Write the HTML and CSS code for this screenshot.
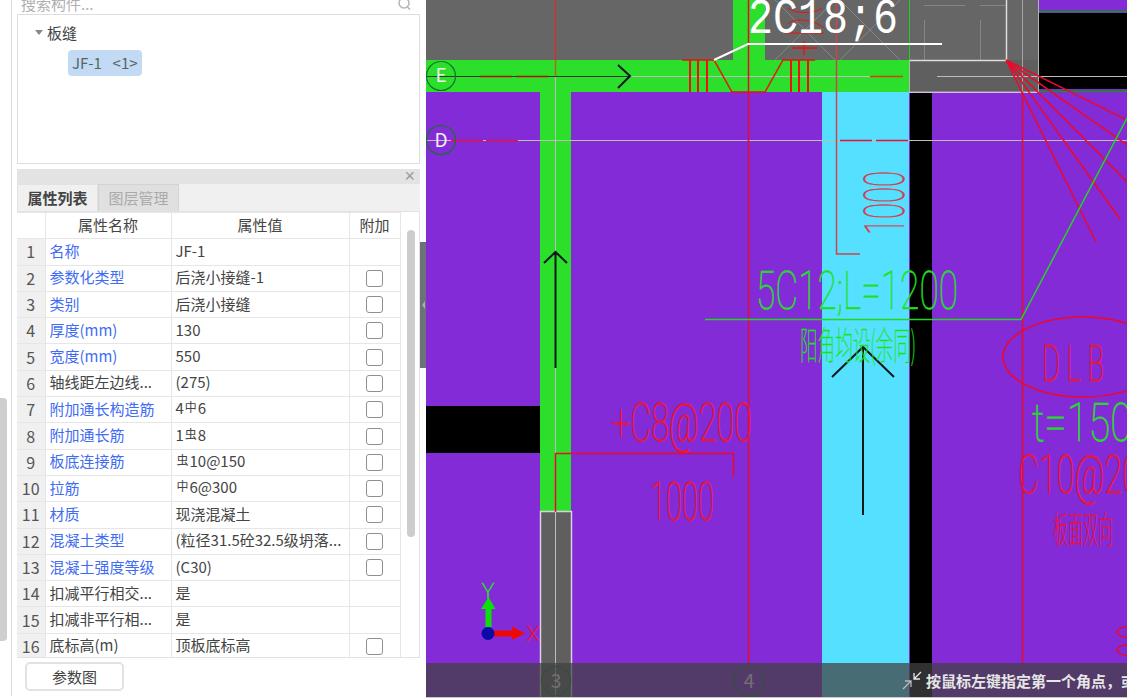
FILE: index.html
```html
<!DOCTYPE html>
<html lang="en">
<head>
    <meta charset="UTF-8">
    <meta name="viewport" content="width=device-width, initial-scale=1.0">
    <title>板缝属性</title>
    <link rel="stylesheet" href="styles.css">
</head>
<body>
<div class="app">
    <!-- Left side: component tree and properties -->
    <div class="sidebar">
        <div class="outer-scroll"><div class="outer-thumb"></div></div>

        <div class="panel">
            <div class="search">
                <span class="search-text">搜索构件...</span>
                <svg class="search-icon" width="16" height="16" viewBox="0 0 16 16">
                    <circle cx="7" cy="3" r="5" fill="none" stroke="#b5b5b5" stroke-width="1.5"/>
                    <line x1="10.5" y1="7" x2="13" y2="9.5" stroke="#b5b5b5" stroke-width="1.5"/>
                </svg>
            </div>

            <div class="tree">
                <div class="tree-group"><span class="tree-arrow"></span>板缝</div>
                <div class="tree-item">JF-1 &nbsp;&lt;1&gt;</div>
            </div>

            <div class="prop-head"><span class="prop-close">×</span></div>
            <div class="tabs">
                <div class="tab active">属性列表</div>
                <div class="tab">图层管理</div>
            </div>

            <div class="prop-body">
                <table class="props">
                    <colgroup>
                        <col class="col-num"><col class="col-name"><col class="col-val"><col class="col-add">
                    </colgroup>
                    <tr class="head"><th></th><th>属性名称</th><th>属性值</th><th>附加</th></tr>
                    <tr><td class="num">1</td><td class="link">名称</td><td>JF-1</td><td></td></tr>
                    <tr><td class="num">2</td><td class="link">参数化类型</td><td>后浇小接缝-1</td><td><span class="check"></span></td></tr>
                    <tr><td class="num">3</td><td class="link">类别</td><td>后浇小接缝</td><td><span class="check"></span></td></tr>
                    <tr><td class="num">4</td><td class="link">厚度(mm)</td><td>130</td><td><span class="check"></span></td></tr>
                    <tr><td class="num">5</td><td class="link">宽度(mm)</td><td>550</td><td><span class="check"></span></td></tr>
                    <tr><td class="num">6</td><td>轴线距左边线...</td><td>(275)</td><td><span class="check"></span></td></tr>
                    <tr><td class="num">7</td><td class="link">附加通长构造筋</td><td>4<span class="bar">中</span>6</td><td><span class="check"></span></td></tr>
                    <tr><td class="num">8</td><td class="link">附加通长筋</td><td>1<span class="bar">虫</span>8</td><td><span class="check"></span></td></tr>
                    <tr><td class="num">9</td><td class="link">板底连接筋</td><td><span class="bar">虫</span>10@150</td><td><span class="check"></span></td></tr>
                    <tr><td class="num">10</td><td class="link">拉筋</td><td><span class="bar">中</span>6@300</td><td><span class="check"></span></td></tr>
                    <tr><td class="num">11</td><td class="link">材质</td><td>现浇混凝土</td><td><span class="check"></span></td></tr>
                    <tr><td class="num">12</td><td class="link">混凝土类型</td><td>(粒径31.5砼32.5级坍落...</td><td><span class="check"></span></td></tr>
                    <tr><td class="num">13</td><td class="link">混凝土强度等级</td><td>(C30)</td><td><span class="check"></span></td></tr>
                    <tr><td class="num">14</td><td>扣减平行相交...</td><td>是</td><td></td></tr>
                    <tr><td class="num">15</td><td>扣减非平行相...</td><td>是</td><td></td></tr>
                    <tr><td class="num">16</td><td>底标高(m)</td><td>顶板底标高</td><td><span class="check"></span></td></tr>
                </table>
                <div class="prop-scroll"><div class="prop-thumb"></div></div>
            </div>

            <div class="prop-foot"><button class="btn">参数图</button></div>
        </div>

        <div class="handle"><span class="handle-arrow"></span></div>
    </div>

    <!-- Drawing area -->
    <div class="canvas">
        <svg class="drawing" viewBox="426 0 701 697" width="701" height="697">
            <rect x="426" y="0" width="701" height="697" fill="#832bd6"/>

            <!-- concrete and walls -->
            <rect x="426" y="0" width="613" height="60" fill="#666"/>
            <rect x="909" y="60" width="130" height="32" fill="#5f5f5f"/>
            <rect x="1039" y="13" width="88" height="76" fill="#000"/>
            <rect x="426" y="60" width="483" height="32" fill="#2bdf2b"/>
            <rect x="733" y="0" width="32" height="60" fill="#2bdf2b"/>
            <rect x="540" y="92" width="31" height="420" fill="#2bdf2b"/>
            <rect x="540.5" y="511.5" width="31" height="190" fill="#5f5f5f" stroke="#d9d0e4" stroke-width="1.5"/>
            <rect x="822" y="92" width="87" height="605" fill="#56e0ff"/>
            <rect x="910" y="92" width="22" height="605" fill="#000"/>
            <rect x="426" y="406" width="114" height="47" fill="#000"/>

            <!-- grey details in the corner block -->
            <g stroke="#858585" stroke-width="1" fill="none">
                <path d="M775 0L835 60M835 0L775 60M840 0L900 60M900 0L840 60"/>
                <path d="M924.500 20V60M980.500 20V60M924 5.500H965M980 5.500H1006"/>
            </g>
            <g stroke="#dcdcdc" fill="none">
                <path d="M909 60.500H1006.500V0" stroke-width="1.5"/>
                <path d="M909.500 60V92H1038.500V0" stroke="#b5b5b5"/>
                <path d="M1022.500 0V92" stroke="#a5a5a5"/>
            </g>
            <path d="M909.500 0V60" stroke="#1fd01f"/>
            <path d="M1039 11.500H1127M1039 91.500H1127" stroke="#0a9a0a" stroke-width="1.5"/>
            <path d="M909 92.500H1039" stroke="#d9b8f0" stroke-width="1"/>

            <!-- axis lines -->
            <g stroke="#bdbdbd" stroke-width="1">
                <path d="M426 76.500H870M937 76.500H1127M426 140.500H1127M555.500 76V697"/>
            </g>
            <path d="M426 76.500H630" stroke="#333"/>
            <path d="M555.500 0V60" stroke="#c9352c" stroke-width="1.500"/>
            <path d="M555.500 60V76" stroke="#b5651d" stroke-width="1.500"/>
            <path d="M480 76.500H512M516 76.500H548" stroke="#b30f0f" stroke-width="1.500"/>
            <path d="M870 76.500H903" stroke="#d2420f" stroke-width="1.500"/>
            <path d="M451 140.500H483M486 140.500H518M840 140.500H872M876 140.500H908" stroke="#e8103c" stroke-width="1.500"/>

            <!-- red rebar -->
            <g stroke="#ee1111" stroke-width="1.500" fill="none">
                <path d="M682 60H714L732 92H765L783 60H815"/>
                <path d="M690 60V92M698 60V92M707 60V92M791 60V92M799 60V92M808 60V92" stroke-width="2"/>
                <path d="M792 48H817M804 41V55"/>
                <path d="M788 8C795 14 815 14 822 8M788 24C795 17 815 20 824 28M785 33H824" stroke-width="1"/>
            </g>
            <g stroke="#ea0a2c" stroke-width="1.500" fill="none">
                <path d="M748.500 0V663M1022.500 92V663"/>
                <path d="M1006 60L1127 120M1006 60L1127 145M1006 60L1127 182M1006 60L1120 219M1006 60L1096 242"/>
                <path d="M555 453.500H733.500V477M555.500 453V512"/>
                <ellipse cx="1083" cy="357" rx="80" ry="40"/>
                <ellipse cx="1130" cy="632" rx="13" ry="5.500"/>
                <ellipse cx="1130" cy="650" rx="13" ry="5.500"/>
            </g>
            <path d="M836.500 0V254H860" stroke="#c9454f" stroke-width="1.500" fill="none"/>

            <!-- green leader -->
            <path d="M705 319.500H1021L1127 118" stroke="#1fd81f" stroke-width="1.500" fill="none"/>

            <!-- white leader -->
            <path d="M714 60L748 44H942" stroke="#fff" stroke-width="2" fill="none"/>

            <!-- black arrows -->
            <g stroke="#10181c" stroke-width="2" fill="none">
                <path d="M618 65L630 76L618 88"/>
                <path d="M555.500 368V252M544 263L555.500 252L567 263"/>
                <path d="M863 515V347M832 377L863 347L894 377"/>
            </g>

            <!-- drawing text -->
            <text class="cad-white" x="748" y="33" textLength="150" lengthAdjust="spacingAndGlyphs">2C18;6</text>
            <text class="cad cad-green" x="756" y="309" textLength="202" lengthAdjust="spacingAndGlyphs">5C12;L=1200</text>
            <text class="cad-cn cad-cn-green" x="800" y="359" textLength="116" lengthAdjust="spacingAndGlyphs">阳角均设(余同)</text>
            <text class="cad cad-red" x="612" y="441" textLength="140" lengthAdjust="spacingAndGlyphs">+C8@200</text>
            <text class="cad cad-red" x="650" y="520" textLength="64" lengthAdjust="spacingAndGlyphs">1000</text>
            <text class="cad cad-red cad-dlb" transform="translate(1042 381) scale(.55 1)">DLB</text>
            <text class="cad cad-green" x="1032" y="441" textLength="100" lengthAdjust="spacingAndGlyphs">t=150</text>
            <text class="cad cad-red" x="1018" y="493" textLength="122" lengthAdjust="spacingAndGlyphs">C10@20</text>
            <text class="cad-cn cad-cn-red" x="1053" y="543" textLength="60" lengthAdjust="spacingAndGlyphs">板面双向</text>
            <text class="cad cad-dim" transform="translate(904 235) rotate(-90)" textLength="64" lengthAdjust="spacingAndGlyphs">1000</text>

            <!-- axis bubbles -->
            <g fill="none" stroke="#17702f" stroke-width="1.200">
                <circle cx="441" cy="76" r="14.500"/>
                <circle cx="441" cy="140" r="14.500"/>
                <circle cx="556" cy="681" r="14.500"/>
                <circle cx="749" cy="681" r="15"/>
            </g>
            <text class="bubble" x="441" y="82">E</text>
            <text class="bubble" x="441" y="147">D</text>
            <text class="bubble" x="556" y="688">3</text>
            <text class="bubble" x="749" y="688">4</text>

            <!-- xy gizmo -->
            <path d="M485.500 627V609H481L488.500 597L495.500 609H491.500V627Z" fill="#0be00b"/>
            <path d="M494 630.500H512V626.500L525 633.500L512 640V636.500H494Z" fill="#f00808"/>
            <circle cx="488" cy="633.500" r="6.500" fill="#0a0aa8"/>
            <text class="gizmo gizmo-y" x="488" y="598">Y</text>
            <text class="gizmo gizmo-x" x="533" y="641">X</text>
        </svg>

        <!-- status hint over the drawing -->
        <div class="hint">
            <svg class="hint-icon" width="20" height="20" viewBox="0 0 20 20">
                <g stroke="#e8e8e8" stroke-width="1.300" fill="none">
                    <path d="M19 2L12 9M12 3V9H18"/>
                    <path d="M1 19L9 11M3 11H9V17" stroke="#bbb"/>
                </g>
            </svg>
            <span class="hint-text">按鼠标左键指定第一个角点，或</span>
        </div>
    </div>
</div>
</body>
</html>
```

FILE: styles.css
```css
/* Global styling */
* {
    box-sizing: border-box;
}

html, body {
    margin: 0;
    padding: 0;
    height: 100%;
    overflow: hidden;
    background: #fff;
    font-family: "Noto Sans CJK SC", "Liberation Sans", sans-serif;
    font-size: 15px;
    color: #444;
}

.app {
    display: flex;
    width: 1127px;
    height: 698px;
}

/* Sidebar */
.sidebar {
    display: flex;
    width: 426px;
    flex: none;
    background: #fff;
}

.outer-scroll {
    width: 12px;
    height: 696px;
    padding-top: 398px;
    border-right: 1px solid #ddd;
    flex: none;
}

.outer-thumb {
    width: 7px;
    height: 243px;
    background: #cecece;
    border-radius: 0 4px 4px 0;
}

.panel {
    width: 403px;
    margin-left: 5px;
    flex: none;
}

.handle {
    width: 6px;
    height: 126px;
    margin-top: 242px;
    margin-left: 0;
    background: #6b7278;
    display: flex;
    align-items: center;
    justify-content: center;
}

.handle-arrow {
    border-right: 3px solid #a8adb2;
    border-top: 4px solid transparent;
    border-bottom: 4px solid transparent;
}

/* Search */
.search {
    height: 14px;
    overflow: hidden;
    display: flex;
    justify-content: space-between;
    padding: 0 5px 0 4px;
}

.search-text {
    margin-top: -6px;
    line-height: 20px;
    color: #b0b0b0;
}

.search-icon {
    margin-right: 2px;
}

/* Tree */
.tree {
    height: 150px;
    border: 1px solid #dedede;
    padding-top: 7px;
}

.tree-group {
    display: flex;
    align-items: center;
    height: 20px;
    padding-left: 17px;
    color: #444;
}

.tree-arrow {
    width: 0;
    height: 0;
    margin-right: 4px;
    border-top: 5px solid #888;
    border-left: 4px solid transparent;
    border-right: 4px solid transparent;
}

.tree-item {
    width: 74px;
    height: 26px;
    margin: 8px 0 0 50px;
    padding-left: 4px;
    line-height: 25px;
    white-space: nowrap;
    word-spacing: 2px;
    color: #566;
    background: #c2daf4;
    border-radius: 4px;
}

/* Property panel */
.prop-head {
    height: 15px;
    margin-top: 5px;
    background: #e3e3e3;
    text-align: right;
    padding-right: 5px;
}

.prop-close {
    display: block;
    font-family: "Liberation Sans", sans-serif;
    font-size: 18px;
    line-height: 15px;
    color: #999;
}

.tabs {
    display: flex;
    height: 28px;
    background: #f0f0f0;
    border-bottom: 1px solid #e2e2e2;
}

.tab {
    width: 81px;
    text-align: center;
    line-height: 26px;
    color: #aaa;
    background: #e0e0e0;
    border: 1px solid #d0d4d8;
    border-bottom: none;
}

.tab.active {
    font-weight: bold;
    color: #444;
    background: #f0f0f0;
    border-color: #e2e2e2;
}

.prop-body {
    display: flex;
    height: 446px;
    overflow: hidden;
    border-right: 1px solid #e2e2e2;
    border-bottom: 1px solid #e2e2e2;
}

.props {
    width: 383px;
    flex: none;
    table-layout: fixed;
    border-collapse: collapse;
}

.col-num { width: 28px; }
.col-name { width: 126px; }
.col-val { width: 178px; }
.col-add { width: 51px; }

.props tr {
    height: 26.300px;
}

.props th,
.props td {
    padding: 0 0 2px 4px;
    border: 1px solid #e6e6e6;
    font-weight: normal;
    font-size: 15px;
    line-height: 18px;
    white-space: nowrap;
    overflow: hidden;
}

.props th {
    text-align: center;
    padding: 0 0 2px;
}

.props td:nth-child(4) {
    text-align: center;
    padding: 0;
}

.props td:first-child,
.props th:first-child {
    border-left: none;
}

.props td.num {
    padding: 0 0 1px;
    text-align: center;
    background: #f0f0f0;
    color: #555;
    font-size: 16px;
}

.props td.link {
    color: #3f6cf2;
}

.bar {
    font-size: 12px;
    position: relative;
    top: -2px;
    margin: 0 1px;
}

.check {
    display: block;
    width: 17px;
    height: 17px;
    margin: 0 auto;
    border: 1.500px solid #8f8f8f;
    border-radius: 3px;
    background: #fff;
}

.prop-scroll {
    flex: 1;
    padding: 18px 4px 0 6px;
}

.prop-thumb {
    height: 307px;
    background: #cdcdcd;
    border-radius: 5px;
}

.prop-foot {
    padding: 4px 0 0 8px;
}

.btn {
    width: 99px;
    height: 29px;
    padding: 0;
    font-family: inherit;
    font-size: 15px;
    color: #444;
    background: #fff;
    border: 2px solid #e2e2e2;
    border-radius: 5px;
}

/* Drawing */
.canvas {
    position: relative;
    flex: 1;
    height: 698px;
    background: #c9c9c9;
    overflow: hidden;
}

.drawing {
    display: block;
}

.cad {
    font-family: "Roboto", "Liberation Sans", sans-serif;
    font-weight: 100;
    font-size: 54px;
    stroke-width: 0.6px;
}

.cad-green { fill: #1fe01f; stroke: #1fe01f; }
.cad-red { fill: #f0142c; stroke: #f0142c; }
.cad-dim { fill: #d83a4c; stroke: #d83a4c; font-size: 56px; }
.cad-dlb { font-size: 50px; letter-spacing: 12px; }

.cad-white {
    font-family: "Liberation Mono", monospace;
    font-size: 50px;
    fill: #fff;
}

.cad-cn {
    font-family: "Noto Sans CJK SC", sans-serif;
    font-weight: 100;
    font-size: 38px;
    stroke-width: 0.4px;
}

.cad-cn-green { fill: #14e814; stroke: #14e814; }
.cad-cn-red { fill: #ee1030; stroke: #ee1030; font-size: 36px; }

.bubble {
    font-size: 19px;
    fill: #eee;
    text-anchor: middle;
}

.gizmo {
    font-family: "Roboto", sans-serif;
    font-weight: 100;
    font-size: 21px;
    text-anchor: middle;
    stroke-width: 0.6px;
}

.gizmo-y { fill: #1fe01f; stroke: #1fe01f; }
.gizmo-x { fill: #f0142c; stroke: #f0142c; }

/* Hint bar lies over the drawing */
.hint {
    position: absolute;
    left: 0;
    right: 0;
    top: 663px;
    height: 34px;
    display: flex;
    align-items: center;
    padding-left: 476px;
    background: rgba(65, 65, 65, 0.735);
    white-space: nowrap;
}

.hint-icon {
    flex: none;
}

.hint-text {
    margin-left: 4px;
    font-size: 15px;
    font-weight: bold;
    color: #e6e6e6;
}
```
